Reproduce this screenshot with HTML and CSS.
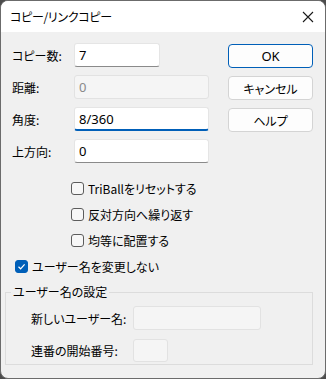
FILE: index.html
```html
<!DOCTYPE html>
<html lang="ja">
<head>
<meta charset="utf-8">
<link rel="stylesheet" href="styles.css">
</head>
<body>
<div class="window">
  <div class="titlebar">
    <span class="title">コピー/リンクコピー</span>
    <svg class="close" width="12" height="12" viewBox="0 0 12 12"><path d="M1 1L11 11M11 1L1 11" stroke="#1a1a1a" stroke-width="1.1" fill="none"/></svg>
  </div>
  <div class="content">
    <div class="top">
      <div class="form">
        <div class="row"><span class="label">コピー数:</span><div class="field short">7</div></div>
        <div class="row"><span class="label">距離:</span><div class="field disabled">0</div></div>
        <div class="row"><span class="label">角度:</span><div class="field focused">8/360</div></div>
        <div class="row"><span class="label">上方向:</span><div class="field">0</div></div>
      </div>
      <div class="buttons">
        <div class="btn default">OK</div>
        <div class="btn">キャンセル</div>
        <div class="btn">ヘルプ</div>
      </div>
    </div>
    <div class="checks">
      <div class="check"><span class="box"></span><span>TriBallをリセットする</span></div>
      <div class="check"><span class="box"></span><span>反対方向へ繰り返す</span></div>
      <div class="check"><span class="box"></span><span>均等に配置する</span></div>
    </div>
    <div class="check main"><span class="box checked"><svg width="9" height="9" viewBox="0 0 9 9"><path d="M1.5 4.8L3.6 6.8L7.6 2.3" stroke="#fff" stroke-width="1.2" fill="none"/></svg></span><span>ユーザー名を変更しない</span></div>
    <fieldset class="group">
      <legend>ユーザー名の設定</legend>
      <div class="grow"><span class="glabel">新しいユーザー名:</span><div class="field disabled wide"></div></div>
      <div class="grow"><span class="glabel">連番の開始番号:</span><div class="field disabled tiny"></div></div>
    </fieldset>
  </div>
</div>
</body>
</html>
```
FILE: styles.css
```css
* { box-sizing: border-box; }
html, body { margin: 0; padding: 0; }
body {
  background: #4c4c4c;
  font-family: "Noto Sans CJK JP", "Noto Sans", sans-serif;
  font-size: 12px;
  font-feature-settings: "palt";
  color: #000;
}
.window {
  width: 326px;
  height: 379px;
  border: 1px solid #6b6b6b;
  border-radius: 8px;
  overflow: hidden;
  background: #f0f0f0;
  display: flex;
  flex-direction: column;
}
.titlebar {
  height: 31px;
  background: #fff;
  display: flex;
  align-items: center;
  justify-content: space-between;
  padding: 0 11px 0 9px;
  flex-shrink: 0;
}
.title { font-size: 12px; letter-spacing: -0.3px; }
.content { flex: 1; padding-top: 11px; }
.top { display: flex; justify-content: space-between; padding: 0 12px 0 11px; }
.form { display: flex; flex-direction: column; gap: 8px; }
.row { display: flex; align-items: center; height: 24px; }
.label { width: 62px; }
.field {
  height: 24px;
  width: 135px;
  background: #fff;
  border: 1px solid #e5e5e5;
  border-bottom-color: #8a8a8a;
  border-radius: 3px;
  padding: 0 4px;
  line-height: 22px;
  font-family: "Noto Sans", sans-serif;
  font-size: 13px;
}
.field.short { width: 86px; }
.field.disabled { background: #f5f5f5; border-color: #e2e2e2; color: #8a8a8a; }
.field.focused { border-bottom: 2px solid #005fb8; }
.buttons { display: flex; flex-direction: column; gap: 8px; padding-top: 1px; }
.btn {
  width: 85px;
  height: 24px;
  background: #fdfdfd;
  border: 1px solid #d4d4d4;
  border-radius: 4px;
  display: flex;
  align-items: center;
  justify-content: center;
}
.btn.default { border-color: #005fb8; font-family: "Noto Sans", sans-serif; font-size: 13px; }
.checks { display: flex; flex-direction: column; padding: 12px 0 0 70px; }
.check { display: flex; align-items: center; height: 26px; gap: 4px; }
.box {
  width: 13px;
  height: 13px;
  border: 1px solid #5c5c5c;
  border-radius: 3px;
  background: #f7f7f7;
  display: flex;
  align-items: center;
  justify-content: center;
}
.box.checked { background: #005fb8; border-color: #005fb8; }
.check.main { padding-left: 14px; }
.group {
  margin: 6px 12px 0 4px;
  border: 1px solid #dcdcdc;
  padding: 7px 0 0 0;
  height: 80px;
}
legend { padding: 0 2px; margin-left: 5px; font-size: 12px; line-height: 14px; }
.grow { display: flex; align-items: center; height: 24px; margin-bottom: 8px; padding-left: 25px; }
.glabel { width: 102px; }
.field.wide { width: 128px; }
.field.tiny { width: 35px; height: 23px; }
```
